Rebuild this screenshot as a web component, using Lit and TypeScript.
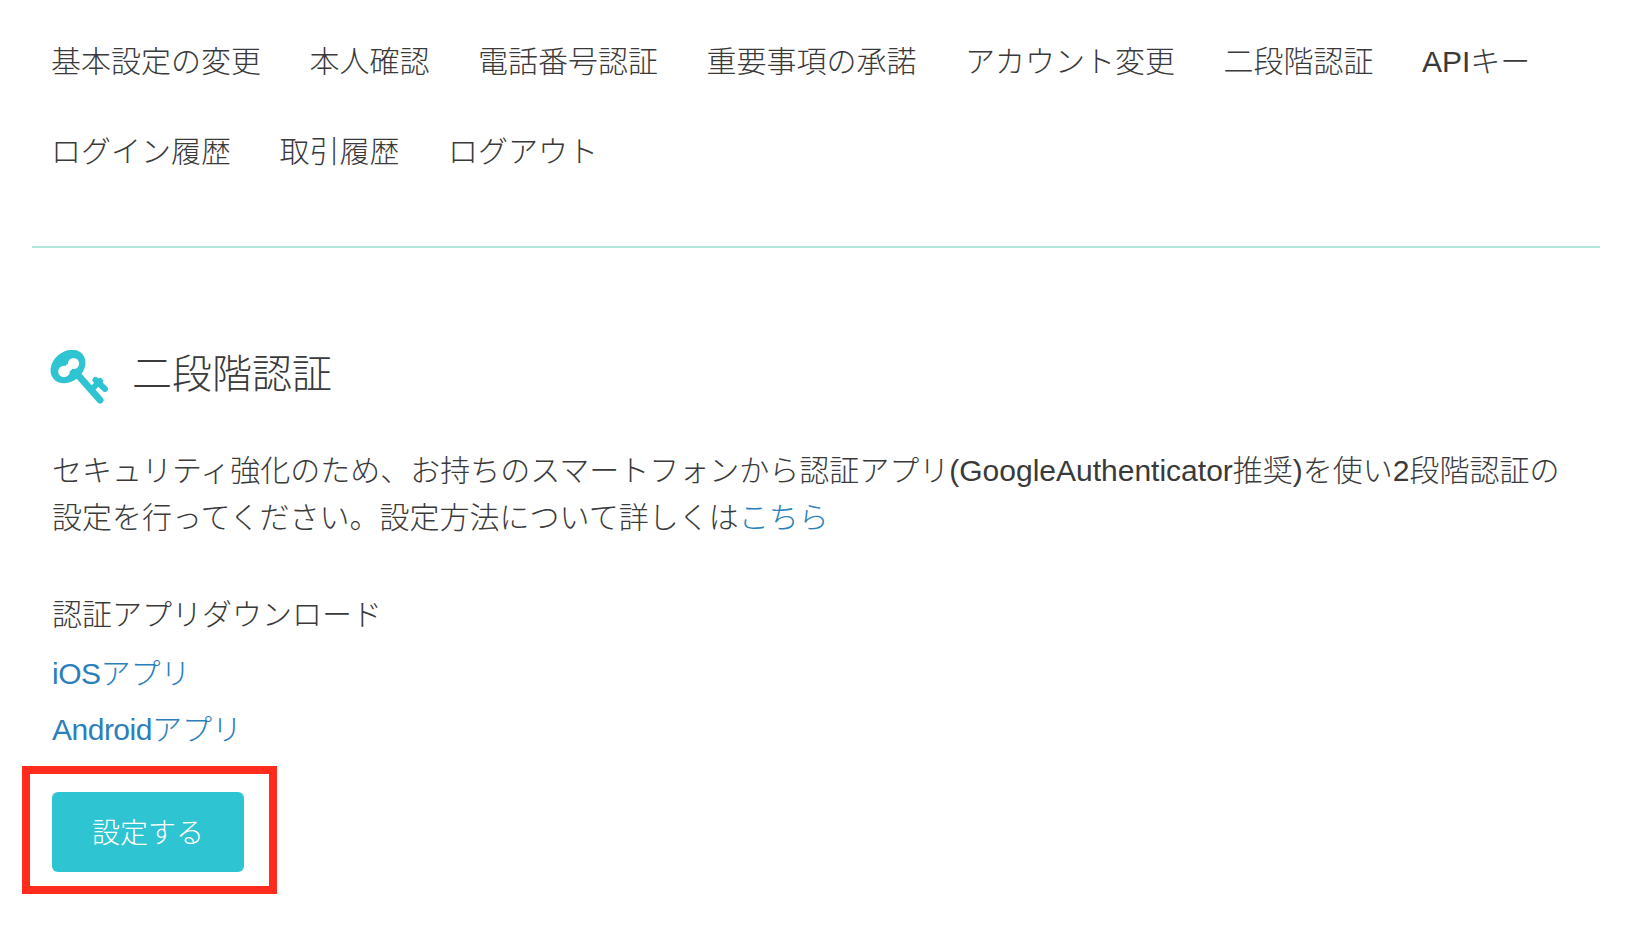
import { LitElement, html, css } from 'lit'
import { customElement } from 'lit/decorators.js'

const NAV = [
	'基本設定の変更',
	'本人確認',
	'電話番号認証',
	'重要事項の承諾',
	'アカウント変更',
	'二段階認証',
	'APIキー',
	'ログイン履歴',
	'取引履歴',
	'ログアウト',
]

@customElement('app-root')
export class AppRoot extends LitElement {
	static styles = css`
		:host {
			display: block;
			position: relative;
			height: 942px;
			background: #fff;
			color: #3a3a3a;
			font-family: "Liberation Sans", "Noto Sans CJK JP", sans-serif;
			font-size: 30px;
			font-weight: 300;
			overflow: hidden;
		}

		* {
			margin: 0;
		}

		a {
			color: #2a80bb;
			text-decoration: none;
		}

		.nav {
			display: flex;
			flex-wrap: wrap;
			align-content: flex-start;
			column-gap: 48.5px;
			row-gap: 45px;
			padding: 39px 51px 0;
			height: 192px;
			line-height: 45px;
		}

		.nav a {
			color: #3a3a3a;
		}

		.rule {
			height: 2px;
			margin: 15px 28px 0 32px;
			background: #b0e6d9;
		}

		.content {
			padding: 0 60px 0 52px;
		}

		.title {
			display: flex;
			align-items: center;
			gap: 22px;
			margin-top: 95px;
			height: 56px;
			font-size: 40px;
			font-weight: 300;
		}

		.key {
			display: block;
			width: 60px;
			height: 60px;
			margin: 18px 0 0 -2px;
			flex: none;
		}

		.lead {
			margin-top: 49px;
			line-height: 46.5px;
		}

		.download {
			margin-top: 51px;
			line-height: 46px;
		}

		.links {
			display: flex;
			flex-direction: column;
			gap: 10px;
			margin-top: 13px;
			line-height: 46px;
		}

		.lat {
			letter-spacing: -0.5px;
		}

		.btn {
			display: flex;
			align-items: center;
			justify-content: center;
			width: 192px;
			height: 80px;
			padding-bottom: 3px;
			box-sizing: border-box;
			margin-top: 39px;
			background: #2fc4d2;
			border-radius: 6px;
			color: #fff;
			font-size: 28px;
		}

		.mark {
			position: absolute;
			left: 22px;
			top: 766px;
			width: 255px;
			height: 128px;
			box-sizing: border-box;
			border: 8px solid #ff2b1c;
		}
	`

	render() {
		return html`
			<nav class="nav">${NAV.map((n) => html`<a>${n}</a>`)}</nav>
			<div class="rule"></div>
			<div class="content">
				<h2 class="title">
					<svg class="key" viewBox="50 350 60 60">
						<ellipse cx="68" cy="366.5" rx="19" ry="15" transform="rotate(-40 68 366.5)" fill="#2fc4d2" />
						<circle cx="64" cy="371.5" r="5.8" fill="#fff" />
						<circle cx="73.5" cy="363.5" r="5.6" fill="#fff" />
						<circle cx="68.7" cy="367.5" r="3.5" fill="#fff" />
						<g fill="none" stroke="#2fc4d2" stroke-linecap="round">
							<path d="M78 375L100 400" stroke-width="7" />
							<path d="M92 389L100 381" stroke-width="6" />
							<path d="M95.5 380L105 389" stroke-width="6" />
						</g>
					</svg>
					二段階認証
				</h2>
				<p class="lead">
					セキュリティ強化のため、お持ちのスマートフォンから認証アプリ(GoogleAuthenticator推奨)を使い2段階認証の設定を行ってください。設定方法について詳しくは<a>こちら</a>
				</p>
				<p class="download">認証アプリダウンロード</p>
				<div class="links">
					<a><span class="lat">iOS</span>アプリ</a>
					<a><span class="lat">Android</span>アプリ</a>
				</div>
				<div class="btn">設定する</div>
			</div>
			<div class="mark"></div>
		`
	}
}
